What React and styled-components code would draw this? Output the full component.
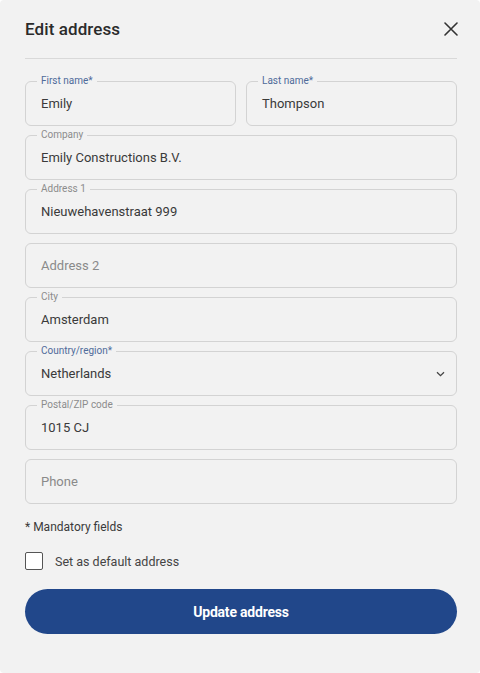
import React, {useState} from 'react';
import styled, {createGlobalStyle} from "styled-components";

const GlobalStyle = createGlobalStyle`
  html, body {
    margin: 0;
    padding: 0;
    background: #ffffff;
  }
  body {
    font-family: Roboto, "Liberation Sans", Arial, sans-serif;
    color: #333;
  }
`;

const fields = [
	{id: 'company', label: 'Company', value: 'Emily Constructions B.V.'},
	{id: 'address1', label: 'Address 1', value: 'Nieuwehavenstraat 999'},
	{id: 'address2', label: '', placeholder: 'Address 2', value: ''},
	{id: 'city', label: 'City', value: 'Amsterdam'},
	{id: 'country', label: 'Country/region*', value: 'Netherlands', required: true, select: true},
	{id: 'postal', label: 'Postal/ZIP code', value: '1015 CJ'},
	{id: 'phone', label: '', placeholder: 'Phone', value: ''},
];

const Field = ({label, value, placeholder, required, select}) => (
	<FieldBox>
		{label && <Label $required={required}>{label}</Label>}
		{value ? <Value>{value}</Value> : <Placeholder>{placeholder}</Placeholder>}
		{select && (
			<Chevron width="9" height="6" viewBox="0 0 9 6">
				<path d="M1 1.2 L4.5 4.6 L8 1.2" fill="none" stroke="#444" strokeWidth="1.3" />
			</Chevron>
		)}
	</FieldBox>
);

const App = () => {
	const [isDefault, setIsDefault] = useState(false);

	return (<>
		<GlobalStyle />
		<Modal>
			<Header>
				<Title>Edit address</Title>
				<CloseBtn aria-label="Close">
					<svg width="14" height="14" viewBox="0 0 14 14">
						<path d="M1 1 L13 13 M13 1 L1 13" stroke="#333" strokeWidth="1.6" strokeLinecap="round" />
					</svg>
				</CloseBtn>
			</Header>
			<Form>
				<Row>
					<Field label="First name*" value="Emily" required />
					<Field label="Last name*" value="Thompson" required />
				</Row>
				{fields.map(f => <Field key={f.id} {...f} />)}
			</Form>
			<Note>* Mandatory fields</Note>
			<CheckRow onClick={() => setIsDefault(!isDefault)}>
				<Box $checked={isDefault} />
				<span>Set as default address</span>
			</CheckRow>
			<Submit>Update address</Submit>
		</Modal>
	</>);
};

export default App;

const Modal = styled.div`
  background: #f2f2f2;
  border-radius: 4px;
  min-height: 673px;
  box-sizing: border-box;
  padding: 0 23px 0 25px;
`;

const Header = styled.div`
  display: flex;
  align-items: center;
  justify-content: space-between;
  height: 58px;
  border-bottom: 1px solid #d9d9d9;
`;

const Title = styled.h2`
  margin: 0;
  font-size: 17px;
  font-weight: 500;
  color: #2b2b2b;
  letter-spacing: 0.1px;
`;

const CloseBtn = styled.button`
  background: none;
  border: none;
  padding: 0;
  margin-right: -1px;
  display: flex;
  cursor: pointer;
`;

const Form = styled.div`
  display: flex;
  flex-direction: column;
  gap: 9px;
  padding-top: 22px;
`;

const Row = styled.div`
  display: grid;
  grid-template-columns: 1fr 1fr;
  gap: 10px;
`;

const FieldBox = styled.div`
  position: relative;
  height: 45px;
  box-sizing: border-box;
  border: 1px solid #d3d3d3;
  border-radius: 6px;
  display: flex;
  align-items: center;
  padding: 0 15px;
  font-size: 13px;
`;

const Label = styled.span`
  position: absolute;
  top: -7px;
  left: 11px;
  padding: 0 4px;
  background: #f2f2f2;
  font-size: 10px;
  line-height: 12px;
  color: ${({$required}) => $required ? '#4f6b9a' : '#8c8c8c'};
`;

const Value = styled.span`
  color: #3a3a3a;
`;

const Placeholder = styled.span`
  color: #8a8a8a;
`;

const Chevron = styled.svg`
  margin-left: auto;
  margin-right: -4px;
`;

const Note = styled.p`
  margin: 16px 0 0;
  font-size: 12px;
  color: #3a3a3a;
`;

const CheckRow = styled.label`
  display: flex;
  align-items: center;
  gap: 12px;
  margin-top: 18px;
  font-size: 12.5px;
  color: #444;
  cursor: pointer;
`;

const Box = styled.span`
  width: 18px;
  height: 18px;
  box-sizing: border-box;
  border: 1px solid #555;
  border-radius: 2px;
  background: ${({$checked}) => $checked ? '#21478a' : '#fff'};
`;

const Submit = styled.button`
  display: block;
  width: 100%;
  height: 45px;
  margin-top: 19px;
  border: none;
  border-radius: 23px;
  background: #21478a;
  color: #fff;
  font-family: Roboto, "Liberation Sans", Arial, sans-serif;
  font-size: 14px;
  font-weight: 700;
  letter-spacing: -0.2px;
  cursor: pointer;
`;
